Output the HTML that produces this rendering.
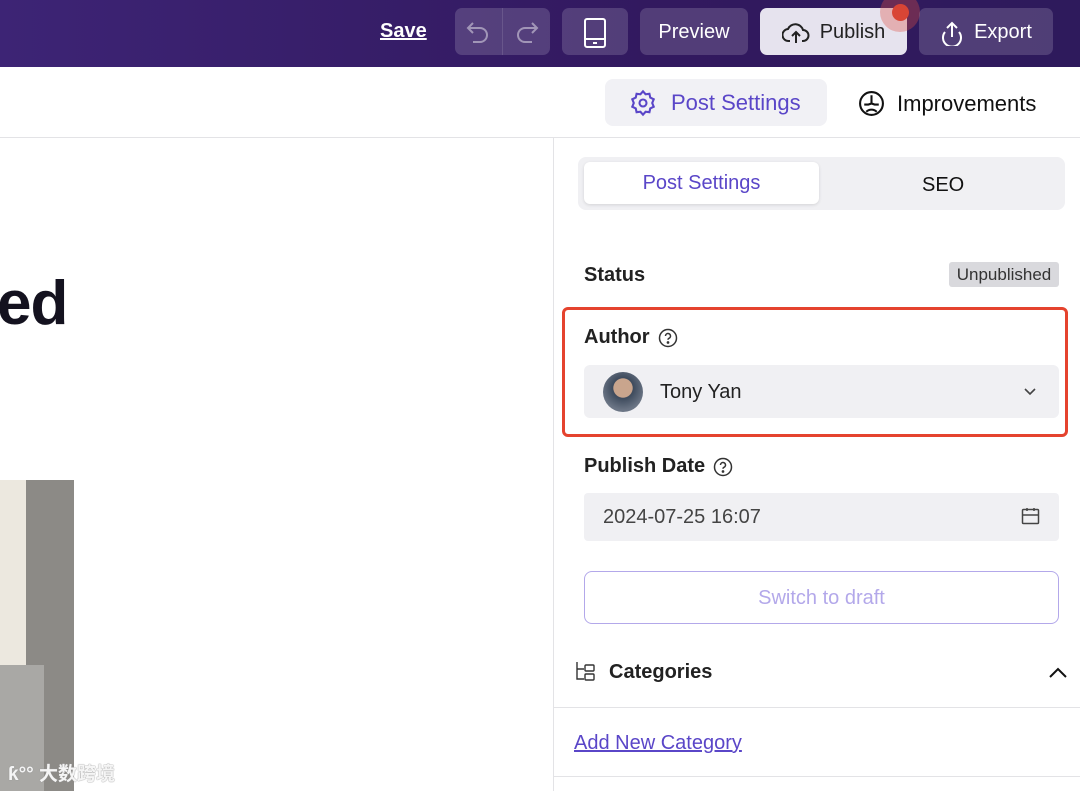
<!DOCTYPE html>
<html><head><meta charset="utf-8"><style>
*{box-sizing:border-box;margin:0;padding:0}
body{width:1080px;height:791px;overflow:hidden;background:#fff;font-family:"Liberation Sans","Noto Sans CJK SC",sans-serif;position:relative;color:#1b1b24}
.top{position:absolute;left:0;top:0;width:1080px;height:67px;background:linear-gradient(90deg,#3d2475,#32195f 60%,#2e1a5c)}
.btn{position:absolute;top:8px;height:47px;border-radius:7px;background:rgba(255,255,255,0.16);color:#fff;font-size:20px;display:flex;align-items:center;justify-content:center;gap:10px;padding-top:2px}
.abs{position:absolute;white-space:nowrap}
svg{display:block}
</style></head><body>
<div class="top">
 <div class="abs" style="left:380px;top:20px;color:#fff;font-size:20px;font-weight:bold;text-decoration:underline">Save</div>
 <div class="btn" style="left:455px;width:95px"></div>
 <div class="abs" style="left:502px;top:8px;width:1px;height:47px;background:rgba(255,255,255,0.12)"></div>
 <svg class="abs" style="left:465px;top:19px" width="28" height="26" viewBox="0 0 28 26" fill="none" stroke="rgba(255,255,255,0.45)" stroke-width="2"><path d="M8 4 L3 9 L8 14 M3 9 H15 a7 7 0 0 1 0 14 H8"/></svg>
 <svg class="abs" style="left:512px;top:19px" width="28" height="26" viewBox="0 0 28 26" fill="none" stroke="rgba(255,255,255,0.45)" stroke-width="2"><path d="M20 4 L25 9 L20 14 M25 9 H13 a7 7 0 0 0 0 14 H20"/></svg>
 <div class="btn" style="left:562px;width:66px"><svg width="22" height="30" viewBox="0 0 22 30" fill="none" stroke="#fff" stroke-width="2"><rect x="1" y="1" width="20" height="28" rx="2"/><path d="M1 21H21M9 25H13"/></svg></div>
 <div class="btn" style="left:640px;width:108px">Preview</div>
 <div class="btn" style="left:760px;width:147px;background:#e6e3ee;color:#222"><svg width="28" height="24" viewBox="0 0 28 24" fill="none" stroke="#222" stroke-width="2"><path d="M8 20H7a6 6 0 0 1-1-12 8 8 0 0 1 15 1 5 5 0 0 1 0 11h-1M14 22V12M10 15l4-4 4 4"/></svg>Publish</div>
 <div class="abs" style="left:880px;top:-8px;width:40px;height:40px;border-radius:50%;background:rgba(220,80,70,0.35)"></div>
 <div class="abs" style="left:892px;top:4px;width:17px;height:17px;border-radius:50%;background:#d94535"></div>
 <div class="btn" style="left:919px;width:134px"><svg width="24" height="26" viewBox="0 0 24 26" fill="none" stroke="#fff" stroke-width="2"><path d="M12 17V3M7 8l5-5 5 5M5 12a9 9 0 1 0 14 0"/></svg>Export</div>
</div>
<div class="abs" style="left:605px;top:79px;width:222px;height:47px;border-radius:8px;background:#f1f1f5;color:#5a46c8;font-size:22px;display:flex;align-items:center;gap:14px;padding-left:24px;padding-top:1px">
<svg width="28" height="28" viewBox="0 0 24 24" fill="none" stroke="#5a46c8" stroke-width="1.8"><circle cx="12" cy="12" r="3"/><path d="M12 2l2.2 2.5 3.3-.4.7 3.2 3 1.5-1.3 3.2 1.3 3.2-3 1.5-.7 3.2-3.3-.4L12 22l-2.2-2.5-3.3.4-.7-3.2-3-1.5L4.1 12 2.8 8.8l3-1.5.7-3.2 3.3.4z"/></svg>Post Settings</div>
<div class="abs" style="left:858px;top:90px;display:flex;align-items:center;gap:12px;font-size:22px;color:#111"><svg width="27" height="27" viewBox="0 0 26 26" fill="none" stroke="#111" stroke-width="2"><circle cx="13" cy="13" r="11"/><path d="M13 5v8M6 14h4l3-1 3 1h4M8 21a7 7 0 0 1 10 0"/></svg>Improvements</div>
<div class="abs" style="left:0;top:137px;width:1080px;height:1px;background:#e3e3e6"></div>
<div class="abs" style="left:553px;top:137px;width:1px;height:654px;background:#e3e3e6"></div>
<div class="abs" style="left:-3px;top:268px;font-size:62px;font-weight:bold;color:#14121f;letter-spacing:-1px">ed</div>
<div class="abs" style="left:0;top:480px;width:74px;height:311px;background:#8c8a86"></div>
<div class="abs" style="left:0;top:480px;width:26px;height:200px;background:#ece8df"></div>
<div class="abs" style="left:0;top:665px;width:44px;height:126px;background:#a9a8a5"></div>
<div class="abs" style="left:8px;top:759px;color:rgba(255,255,255,0.9);font-size:19px;font-weight:bold;text-shadow:0 0 1px #999,0 0 1px #999">ƙ°° 大数跨境</div>
<div class="abs" style="left:578px;top:157px;width:487px;height:53px;border-radius:8px;background:#f0f0f3"></div>
<div class="abs" style="left:584px;top:162px;width:235px;height:42px;border-radius:6px;background:#fff;box-shadow:0 1px 3px rgba(0,0,0,.12);color:#5a46c8;font-size:20px;display:flex;align-items:center;justify-content:center;padding-top:1px">Post Settings</div>
<div class="abs" style="left:922px;top:174px;font-size:20px;color:#111">SEO</div>
<div class="abs" style="left:584px;top:264px;font-size:20px;font-weight:bold;color:#222">Status</div>
<div class="abs" style="left:949px;top:262px;width:110px;height:25px;background:#d9d9dd;border-radius:3px;font-size:17px;color:#333;display:flex;align-items:center;justify-content:center">Unpublished</div>
<div class="abs" style="left:562px;top:307px;width:506px;height:130px;border:3px solid #e5432e;border-radius:6px"></div>
<div class="abs" style="left:584px;top:326px;font-size:20px;font-weight:bold;color:#222;display:flex;align-items:center;gap:8px">Author <svg width="20" height="20" viewBox="0 0 20 20" fill="none" stroke="#333" stroke-width="1.5"><circle cx="10" cy="10" r="8.5"/><path d="M7.5 8a2.5 2.5 0 1 1 3.5 2.3c-.7.3-1 .8-1 1.5"/><circle cx="10" cy="14.5" r=".6" fill="#333"/></svg></div>
<div class="abs" style="left:584px;top:365px;width:475px;height:53px;background:#f0f0f3;border-radius:6px"></div>
<div class="abs" style="left:603px;top:372px;width:40px;height:40px;border-radius:50%;background:radial-gradient(circle at 50% 40%,#c9a58d 0 30%,#3d4a5c 32%,#6b7585 70%)"></div>
<div class="abs" style="left:660px;top:381px;font-size:20px;color:#222">Tony Yan</div>
<svg class="abs" style="left:1023px;top:386px" width="14" height="10" viewBox="0 0 14 10" fill="none" stroke="#444" stroke-width="1.6"><path d="M2 3l5 5 5-5"/></svg>
<div class="abs" style="left:584px;top:455px;font-size:20px;font-weight:bold;color:#222;display:flex;align-items:center;gap:8px">Publish Date <svg width="20" height="20" viewBox="0 0 20 20" fill="none" stroke="#333" stroke-width="1.5"><circle cx="10" cy="10" r="8.5"/><path d="M7.5 8a2.5 2.5 0 1 1 3.5 2.3c-.7.3-1 .8-1 1.5"/><circle cx="10" cy="14.5" r=".6" fill="#333"/></svg></div>
<div class="abs" style="left:584px;top:493px;width:475px;height:48px;background:#f0f0f3;border-radius:4px"></div>
<div class="abs" style="left:603px;top:506px;font-size:20px;color:#444">2024-07-25 16:07</div>
<svg class="abs" style="left:1021px;top:507px" width="19" height="19" viewBox="0 0 19 19" fill="none" stroke="#444" stroke-width="1.5"><rect x="1.5" y="2.5" width="16" height="14" rx="1"/><path d="M1.5 8H17.5M6 1v3M13 1v3"/></svg>
<div class="abs" style="left:584px;top:571px;width:475px;height:53px;border:1.5px solid #b3a8ea;border-radius:8px;color:#b3a8ea;font-size:20px;display:flex;align-items:center;justify-content:center;padding-top:2px">Switch to draft</div>
<svg class="abs" style="left:575px;top:661px" width="22" height="22" viewBox="0 0 22 22" fill="none" stroke="#333" stroke-width="1.4"><path d="M2 1v17h7M2 8h7"/><rect x="10" y="4" width="9" height="6" rx="1"/><rect x="10" y="13" width="9" height="6" rx="1"/></svg>
<div class="abs" style="left:609px;top:661px;font-size:20px;font-weight:bold;color:#222">Categories</div>
<svg class="abs" style="left:1048px;top:667px" width="20" height="12" viewBox="0 0 20 12" fill="none" stroke="#111" stroke-width="2"><path d="M2 10l8-8 8 8"/></svg>
<div class="abs" style="left:554px;top:707px;width:526px;height:1px;background:#e3e3e6"></div>
<div class="abs" style="left:574px;top:732px;font-size:20px;color:#5a46c8;text-decoration:underline">Add New Category</div>
<div class="abs" style="left:554px;top:776px;width:526px;height:1px;background:#e3e3e6"></div>
</body></html>
